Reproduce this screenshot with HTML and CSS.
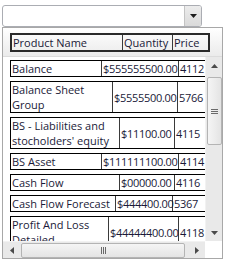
FILE: index.html
```html
<!DOCTYPE html>
<html>
<head>
<meta charset="utf-8">
<link rel="stylesheet" href="styles.css">
</head>
<body>
<div class="combo">
  <div class="combo-field"></div>
  <div class="combo-btn"><svg width="7" height="4" viewBox="0 0 7 4"><path d="M0 0H7L3.5 4Z" fill="#1c1c1c"/></svg></div>
</div>
<div class="panel">
  <div class="head-band">
    <table class="grid head">
      <tr><td class="h1">Product Name</td><td class="h2">Quantity</td><td class="h3">Price</td></tr>
    </table>
  </div>
  <div class="body">
    <div class="rows">
      <table class="grid row r1"><tr><td class="c1">Balance</td><td class="c2">$555555500.00</td><td class="c3">4112</td></tr></table>
      <table class="grid row r2"><tr><td class="c1">Balance Sheet Group</td><td class="c2">$5555500.00</td><td class="c3">5766</td></tr></table>
      <table class="grid row r3"><tr><td class="c1">BS - Liabilities and stocholders' equity</td><td class="c2">$11100.00</td><td class="c3">4115</td></tr></table>
      <table class="grid row r4"><tr><td class="c1">BS Asset</td><td class="c2">$111111100.00</td><td class="c3">4114</td></tr></table>
      <table class="grid row r5"><tr><td class="c1">Cash Flow</td><td class="c2">$00000.00</td><td class="c3">4116</td></tr></table>
      <table class="grid row r6"><tr><td class="c1">Cash Flow Forecast</td><td class="c2">$444400.00</td><td class="c3">5367</td></tr></table>
      <table class="grid row r7"><tr><td class="c1">Profit And Loss Detailed</td><td class="c2">$44444400.00</td><td class="c3">4118</td></tr></table>
    </div>
    <div class="vscroll">
      <div class="sb-btn"><svg width="7" height="4" viewBox="0 0 7 4"><path d="M0 4H7L3.5 0Z" fill="#4a4a4a"/></svg></div>
      <div class="vthumb"><span class="grip-h"></span><span class="grip-h"></span><span class="grip-h"></span></div>
      <div class="sb-fill"></div>
      <div class="sb-btn"><svg width="7" height="4" viewBox="0 0 7 4"><path d="M0 0H7L3.5 4Z" fill="#4a4a4a"/></svg></div>
    </div>
    <div class="hscroll">
      <div class="sb-btn"><svg width="4" height="7" viewBox="0 0 4 7"><path d="M4 0V7L0 3.5Z" fill="#4a4a4a"/></svg></div>
      <div class="hthumb"><span class="grip-v"></span><span class="grip-v"></span><span class="grip-v"></span></div>
      <div class="sb-fill"></div>
      <div class="sb-btn"><svg width="4" height="7" viewBox="0 0 4 7"><path d="M0 0V7L4 3.5Z" fill="#4a4a4a"/></svg></div>
    </div>
    <div class="corner"></div>
  </div>
</div>
</body>
</html>
```
FILE: styles.css
```css
body {
  margin: 0;
  background: #fff;
  font-family: "Open Sans", sans-serif;
  font-size: 11px;
  color: #1a1a38;
}
.combo {
  display: flex;
  box-sizing: border-box;
  width: 200px;
  height: 22px;
  margin: 5px 0 0 2px;
  border: 1px solid #abadb3;
  border-radius: 3px;
  background: #fff;
}
.combo-field { flex: 1; }
.combo-btn {
  width: 16px;
  display: flex;
  align-items: center;
  justify-content: center;
  background: linear-gradient(#ececec, #dadada);
  border-left: 1px solid #c4c4c4;
  border-radius: 0 2px 2px 0;
}
.panel {
  box-sizing: border-box;
  width: 221px;
  height: 232px;
  margin-left: 2px;
  border: 1px solid #a8a8a8;
}
.head-band {
  box-sizing: border-box;
  height: 29px;
  padding: 5px 0 0 7px;
  border-bottom: 1px solid #dcdcdc;
  background: linear-gradient(#ffffff, #ebebeb);
}
.grid {
  border-collapse: separate;
  border-spacing: 0;
  border: 1px solid #000;
  table-layout: fixed;
}
.grid td {
  box-sizing: border-box;
  padding: 0 1px;
  line-height: 15px;
  vertical-align: middle;
  border-left: 1px solid #3a3a3a;
}
.grid td:first-child { border-left: none; }
.head { width: 200px; border-width: 2px; border-color: #2a2a2a; }
.head td { white-space: nowrap; }
.head .h1 { width: 110px; }
.head .h2 { width: 50px; }
.body {
  display: grid;
  grid-template-columns: 202px 17px;
  grid-template-rows: 184px 17px;
}
.rows {
  overflow: hidden;
  padding: 3px 0 0 7px;
}
.row { width: 210px; margin-bottom: 4px; }
.row .c2, .row .c3 { white-space: nowrap; letter-spacing: -0.3px; }
.r1 .c1 { width: 90px; } .r1 .c2 { width: 77px; }
.r2 .c1 { width: 101px; } .r2 .c2 { width: 65px; }
.r3 .c1 { width: 108px; } .r3 .c2 { width: 55px; }
.r4 .c1 { width: 90px; } .r4 .c2 { width: 77px; }
.r5 .c1 { width: 108px; } .r5 .c2 { width: 55px; }
.r6 .c1 { width: 104px; } .r6 .c2 { width: 57px; }
.r7 .c1 { width: 97px; } .r7 .c2 { width: 70px; }
.vscroll {
  display: flex;
  flex-direction: column;
  align-items: center;
  background: #e9e9e9;
  border-left: 1px solid #f2f2f2;
  box-sizing: border-box;
}
.hscroll {
  display: flex;
  align-items: center;
  background: #e9e9e9;
  border-top: 1px solid #f2f2f2;
  box-sizing: border-box;
}
.sb-btn {
  width: 17px;
  height: 17px;
  flex: none;
  display: flex;
  align-items: center;
  justify-content: center;
}
.sb-fill { flex: 1; }
.vthumb {
  box-sizing: border-box;
  width: 15px;
  height: 68px;
  margin-top: 3px;
  border: 1px solid #b4b4b4;
  border-radius: 2px;
  background: linear-gradient(90deg, #f5f5f5, #e4e4e4);
  display: flex;
  flex-direction: column;
  align-items: center;
  justify-content: center;
  gap: 1px;
}
.grip-h { width: 7px; height: 1px; background: #6a6a6a; }
.hthumb {
  box-sizing: border-box;
  width: 164px;
  height: 15px;
  margin-left: 1px;
  border: 1px solid #b4b4b4;
  border-radius: 2px;
  background: linear-gradient(#f5f5f5, #e4e4e4);
  display: flex;
  align-items: center;
  justify-content: center;
  gap: 1px;
}
.grip-v { width: 1px; height: 7px; background: #6a6a6a; }
.corner { background: #fff; }
```
